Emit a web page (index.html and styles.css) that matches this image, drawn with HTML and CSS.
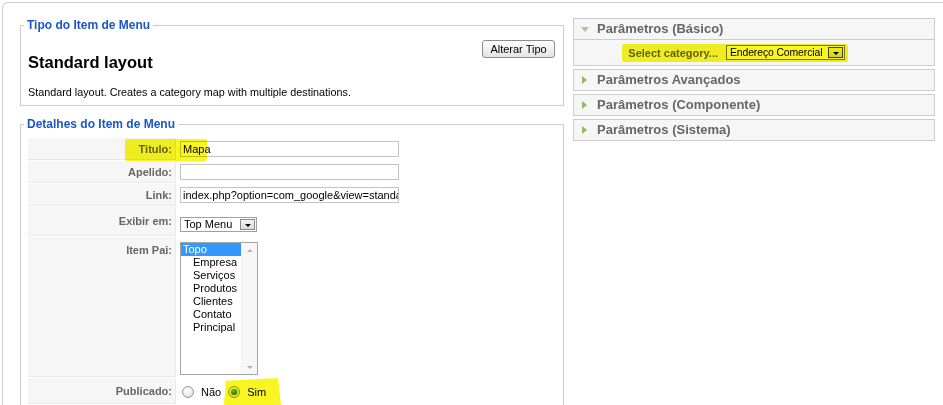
FILE: index.html
```html
<!DOCTYPE html>
<html lang="pt">
<head>
<meta charset="utf-8">
<title>Item de Menu</title>
<link rel="stylesheet" href="styles.css">
</head>
<body>
<div class="page">
  <div class="main">
    <fieldset class="box type">
      <legend>Tipo do Item de Menu</legend>
      <div class="type-head">
        <h2>Standard layout</h2>
        <button class="btn" type="button">Alterar Tipo</button>
      </div>
      <p class="desc">Standard layout. Creates a category map with multiple destinations.</p>
    </fieldset>

    <fieldset class="box details">
      <legend>Detalhes do Item de Menu</legend>
      <div class="form">
        <div class="key">Titulo:</div>
        <div class="val"><div class="input">Mapa</div></div>

        <div class="key">Apelido:</div>
        <div class="val"><div class="input"></div></div>

        <div class="key">Link:</div>
        <div class="val"><div class="input">index.php?option=com_google&amp;view=standard</div></div>

        <div class="key">Exibir em:</div>
        <div class="val"><div class="select sel-menu"><span class="sel-text">Top Menu</span><span class="sel-btn"><span class="down"></span></span></div></div>

        <div class="key top">Item Pai:</div>
        <div class="val top">
          <div class="listbox">
            <div class="opts">
              <div class="opt selected">Topo</div>
              <div class="opt sub">Empresa</div>
              <div class="opt sub">Serviços</div>
              <div class="opt sub">Produtos</div>
              <div class="opt sub">Clientes</div>
              <div class="opt sub">Contato</div>
              <div class="opt sub">Principal</div>
            </div>
            <div class="scroll"><span class="up-arr"></span><span class="dn-arr"></span></div>
          </div>
        </div>

        <div class="key">Publicado:</div>
        <div class="val radios">
          <span class="radio"></span><span class="rlabel">Não</span>
          <span class="radio on"></span><span class="rlabel">Sim</span>
        </div>
      </div>
    </fieldset>
  </div>

  <div class="side">
    <div class="panel">
      <div class="phead"><span class="tri-down"></span>Parâmetros (Básico)</div>
      <div class="pbody">
        <div class="pkey">Select category...</div>
        <div class="pval"><div class="select sel-cat"><span class="sel-text">Endereço Comercial</span><span class="sel-btn dark"><span class="down"></span></span></div></div>
      </div>
    </div>
    <div class="panel">
      <div class="phead"><span class="tri-right"></span>Parâmetros Avançados</div>
    </div>
    <div class="panel">
      <div class="phead"><span class="tri-right"></span>Parâmetros (Componente)</div>
    </div>
    <div class="panel">
      <div class="phead"><span class="tri-right"></span>Parâmetros (Sistema)</div>
    </div>
  </div>
</div>

<span class="mark mark-titulo"></span>
<span class="mark mark-cat"></span>
<span class="mark mark-sim"></span>
</body>
</html>
```

FILE: styles.css
```css
html, body {
  margin: 0;
  padding: 0;
  background: #fff;
}
body {
  position: relative;
  width: 943px;
  height: 405px;
  overflow: hidden;
  font-family: "Liberation Sans", Arial, sans-serif;
  font-size: 11px;
  color: #000;
}

.page {
  margin: 2px 0 0 2px;
  border-top: 1px solid #ccc;
  border-left: 1px solid #ccc;
  border-top-left-radius: 6px;
  padding: 15px 0 0 17px;
  height: 400px;
  display: flex;
  align-items: flex-start;
}

.main {
  width: 544px;
  flex: none;
}

.box {
  margin: 0;
  min-width: 0;
  border: 1px solid #ccc;
  padding: 0 6px 6px 7px;
}
.box legend {
  margin-left: -4px;
  padding: 0 3px;
  font: bold 12px/14px "Liberation Sans", Arial, sans-serif;
  color: #1a57c4;
}
.type {
  padding-right: 8px;
}

.type-head {
  display: flex;
  justify-content: space-between;
  align-items: flex-start;
  padding-top: 8px;
}
.type-head h2 {
  margin: 12px 0 0;
  font: bold 16.5px/20px "Liberation Sans", Arial, sans-serif;
  color: #000;
}
.btn {
  width: 73px;
  height: 18px;
  margin: 0;
  padding: 0;
  border: 1px solid #8c8c8c;
  border-radius: 3px;
  background: linear-gradient(#fdfdfd, #e4e4e4);
  font: 11px/16px "Liberation Sans", Arial, sans-serif;
  color: #000;
}
.desc {
  margin: 13px 0 0;
  line-height: 14px;
  font-size: 10.8px;
}

.details {
  margin-top: 11px;
  height: 290px;
}

.form {
  margin-top: 7px;
  display: grid;
  grid-template-columns: 148px 1fr;
  grid-template-rows: 22px 22px 22px 29px auto 26px;
  gap: 1px;
}
.key {
  box-sizing: border-box;
  background: #f6f6f6;
  border-bottom: 1px solid #e9e9e9;
  border-right: 1px solid #e9e9e9;
  color: #666;
  font-weight: bold;
  display: flex;
  justify-content: flex-end;
  align-items: center;
  padding-right: 3px;
  line-height: 14px;
}
.key.top {
  align-items: flex-start;
  padding-top: 6px;
}
.val {
  display: flex;
  align-items: center;
  padding-left: 3px;
}
.val.top {
  align-items: flex-start;
  padding-top: 5px;
  padding-bottom: 2px;
}

.input {
  box-sizing: border-box;
  width: 219px;
  height: 16px;
  border: 1px solid #c3c3c3;
  background: #fff;
  padding: 0 2px;
  line-height: 14px;
  white-space: nowrap;
  overflow: hidden;
}

.select {
  box-sizing: border-box;
  display: flex;
  align-items: center;
  height: 15px;
  border: 1px solid #a0a0a0;
  background: #fff;
  padding: 0 1px 0 3px;
}
.sel-text {
  flex: 1;
  line-height: 13px;
  white-space: nowrap;
  overflow: hidden;
}
.sel-btn {
  box-sizing: border-box;
  flex: none;
  width: 15px;
  height: 11px;
  border: 1px solid #8a8a8a;
  background: linear-gradient(#f4f4f4, #dcdcdc);
  display: flex;
  align-items: center;
  justify-content: center;
}
.sel-btn.dark {
  border-color: #444;
}
.down {
  width: 0;
  height: 0;
  border-left: 3px solid transparent;
  border-right: 3px solid transparent;
  border-top: 3px solid #000;
  margin-top: 1px;
}
.sel-menu {
  width: 77px;
  margin-top: 6px;
}

.listbox {
  box-sizing: border-box;
  width: 78px;
  height: 133px;
  border: 1px solid #a5a5a5;
  display: flex;
  background: #fff;
}
.opts {
  width: 60px;
}
.opt {
  line-height: 13px;
  padding-left: 2px;
  white-space: nowrap;
}
.opt.selected {
  background: #3399ff;
  color: #fff;
}
.opt.sub {
  padding-left: 12px;
}
.scroll {
  flex: 1;
  background: #f7f7f7;
  border-left: 1px solid #f0f0f0;
  display: flex;
  flex-direction: column;
  justify-content: space-between;
  align-items: center;
  padding: 6px 0 5px;
}
.up-arr {
  width: 0;
  height: 0;
  border-left: 3px solid transparent;
  border-right: 3px solid transparent;
  border-bottom: 3px solid #b5b5b5;
}
.dn-arr {
  width: 0;
  height: 0;
  border-left: 3px solid transparent;
  border-right: 3px solid transparent;
  border-top: 3px solid #b5b5b5;
}

.radios {
  padding-left: 5px;
  padding-top: 1px;
}
.radio {
  box-sizing: border-box;
  width: 12px;
  height: 12px;
  border-radius: 50%;
  border: 1px solid #999;
  background: radial-gradient(circle at 40% 35%, #fff 0, #f2f2f2 40%, #d6d6d6 100%);
  display: inline-flex;
  align-items: center;
  justify-content: center;
  flex: none;
}
.radio.on::after {
  content: "";
  width: 6px;
  height: 6px;
  border-radius: 50%;
  background: radial-gradient(circle at 40% 35%, #7fd07f 0, #1f8a2a 55%, #0d4d14 100%);
}
.rlabel {
  margin: 0 7px 0 7px;
  line-height: 14px;
}

.side {
  width: 362px;
  margin-left: 9px;
  flex: none;
}
.panel {
  border: 1px solid #ccc;
  background: #f6f6f6;
  margin-bottom: 3px;
}
.phead {
  height: 20px;
  display: flex;
  align-items: center;
  padding-left: 7px;
  font: bold 13px/20px "Liberation Sans", Arial, sans-serif;
  color: #666;
}
.tri-right {
  width: 0;
  height: 0;
  border-top: 4px solid transparent;
  border-bottom: 4px solid transparent;
  border-left: 5px solid #8fbb63;
  margin: 0 10px 0 1px;
}
.tri-down {
  width: 0;
  height: 0;
  border-left: 4px solid transparent;
  border-right: 4px solid transparent;
  border-top: 5px solid #a6c996;
  margin: 0 8px 0 0;
}
.pbody {
  border-top: 1px solid #ccc;
  height: 25px;
  display: grid;
  grid-template-columns: 40% 60%;
  align-items: center;
}
.pkey {
  text-align: right;
  color: #666;
  font-weight: bold;
  line-height: 14px;
}
.pval {
  padding-left: 8px;
  display: flex;
}
.sel-cat {
  width: 119px;
  border-color: #7a7a7a;
}
.sel-cat .sel-text {
  font-size: 10.4px;
  letter-spacing: -0.1px;
}

.mark {
  position: absolute;
  background: #f8f522;
  mix-blend-mode: multiply;
  pointer-events: none;
}
.mark-titulo {
  left: 125px;
  top: 139px;
  width: 82px;
  height: 22px;
  border-radius: 2px;
}
.mark-cat {
  left: 622px;
  top: 44px;
  width: 226px;
  height: 18px;
  border-radius: 2px;
}
.mark-sim {
  left: 224px;
  top: 378px;
  width: 57px;
  height: 27px;
  clip-path: polygon(3% 10%, 95% 0, 100% 100%, 0 100%);
}
```
